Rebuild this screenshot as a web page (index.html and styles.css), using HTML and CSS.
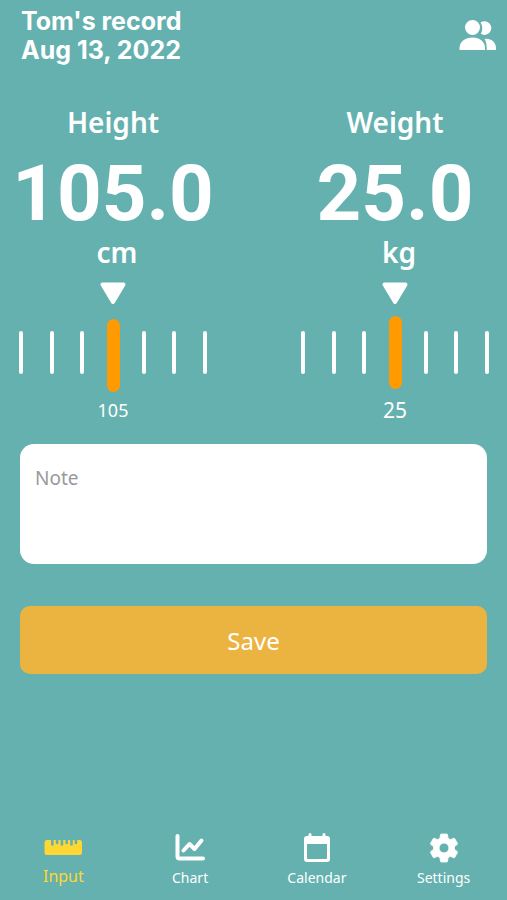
FILE: index.html
```html
<!DOCTYPE html>
<html lang="en">
<head>
<meta charset="utf-8">
<meta name="viewport" content="width=device-width, initial-scale=1">
<title>Tom's record</title>
<link rel="stylesheet" href="styles.css">
</head>
<body>
<header class="topbar">
  <h1 class="title">Tom's record<br>Aug 13, 2022</h1>
  <button class="people" type="button" aria-label="Switch person">
    <svg viewBox="0 0 38 30" width="38" height="30" fill="currentColor" aria-hidden="true">
      <circle cx="13.500" cy="7.500" r="7.500"/>
      <path d="M21.500 2.600a6.800 6.800 0 1 1 .3 11.200c2-3.600 2-7.600-.3-11.200z"/>
      <path d="M.5 30v-2c0-6 5.500-10.500 13-10.500S26 22 26 28v2z"/>
      <path d="M25.500 18.800c6.500-.8 11.500 3.200 11.500 9.200v2h-9.300v-2c0-3.600-.7-6.600-2.200-9.200z"/>
    </svg>
  </button>
</header>
<main>
  <form class="record">
    <div class="measures">
      <section class="measure">
        <h2 class="name" id="height">Height</h2>
        <output class="number">105.0</output>
        <span class="unit">cm</span>
        <svg class="pointer" viewBox="0 0 26 23" width="26" height="23" aria-hidden="true"><path d="M2.500 2.500h21L13 20z"/></svg>
        <div class="ruler">
          <div class="ticks"><i></i><i></i><i></i><i></i><i></i><i></i><i></i></div>
          <input class="slider" type="range" min="102" max="108" step="0.1" value="105" aria-labelledby="height">
        </div>
        <span class="mark">105</span>
      </section>
      <section class="measure">
        <h2 class="name" id="weight">Weight</h2>
        <output class="number">25.0</output>
        <span class="unit">kg</span>
        <svg class="pointer" viewBox="0 0 26 23" width="26" height="23" aria-hidden="true"><path d="M2.500 2.500h21L13 20z"/></svg>
        <div class="ruler ruler-raised">
          <div class="ticks"><i></i><i></i><i></i><i></i><i></i><i></i><i></i></div>
          <input class="slider" type="range" min="22" max="28" step="0.1" value="25" aria-labelledby="weight">
        </div>
        <span class="mark mark-large">25</span>
      </section>
    </div>
    <textarea class="note" placeholder="Note" aria-label="Note"></textarea>
    <button class="save" type="button">Save</button>
  </form>
</main>
<nav class="tabs">
  <a class="tab active" href="#input">
    <svg viewBox="0 0 38 32" width="38" height="32" aria-hidden="true">
      <path fill="currentColor" d="M3 8h4v4.500a1.300 1.300 0 0 0 2.600 0V8h2.200v3a1.300 1.300 0 0 0 2.600 0V8h2.200v4.500a1.300 1.300 0 0 0 2.600 0V8h2.200v3a1.300 1.300 0 0 0 2.600 0V8h2.200v4.500a1.300 1.300 0 0 0 2.600 0V8h1.800v3a1.300 1.300 0 0 0 2.600 0V8H36a2.500 2.500 0 0 1 2 2.500V20.500a2.500 2.500 0 0 1-2.500 2.500H3A2.500 2.500 0 0 1 .5 20.500v-10A2.500 2.500 0 0 1 3 8z"/>
    </svg>
    <span>Input</span>
  </a>
  <a class="tab" href="#chart">
    <svg viewBox="0 0 32 32" width="32" height="32" fill="none" stroke="currentColor" stroke-width="4" stroke-linecap="round" stroke-linejoin="round" aria-hidden="true">
      <path d="M3.500 4v20.500q0 2 2 2H29"/>
      <path d="M9.500 18.500l6-6.500 5 5 7-8.500"/>
    </svg>
    <span>Chart</span>
  </a>
  <a class="tab" href="#calendar">
    <svg viewBox="0 0 32 32" width="32" height="32" aria-hidden="true">
      <path fill="currentColor" fill-rule="evenodd" d="M9 1a1.500 1.500 0 0 1 1.500 1.500V4h11V2.500a1.500 1.500 0 0 1 3 0V4H26a3 3 0 0 1 3 3v20a3 3 0 0 1-3 3H6a3 3 0 0 1-3-3V7a3 3 0 0 1 3-3h1.500V2.500A1.500 1.500 0 0 1 9 1zM6 12v14a1 1 0 0 0 1 1h18a1 1 0 0 0 1-1V12z"/>
    </svg>
    <span>Calendar</span>
  </a>
  <a class="tab" href="#settings">
    <svg viewBox="1 1 22 22" width="32" height="32" aria-hidden="true">
      <path fill="currentColor" stroke="currentColor" stroke-width=".6" stroke-linejoin="round" d="M19.140 12.940c.04-.3.060-.61.060-.94 0-.32-.02-.64-.07-.94l2.030-1.580c.18-.14.230-.41.120-.61l-1.920-3.320c-.12-.22-.37-.29-.59-.22l-2.390.96c-.5-.38-1.030-.7-1.620-.94l-.36-2.540c-.04-.24-.24-.41-.48-.41h-3.840c-.24 0-.43.170-.47.410l-.36 2.540c-.59.240-1.130.57-1.620.94l-2.390-.96c-.22-.08-.47 0-.59.220L2.740 8.870c-.12.210-.08.470.120.610l2.030 1.580c-.05.3-.09.630-.09.940s.02.640.07.940l-2.030 1.580c-.18.140-.23.410-.12.610l1.920 3.320c.12.220.37.290.59.220l2.390-.96c.5.380 1.030.7 1.620.94l.36 2.540c.05.240.24.410.48.410h3.840c.24 0 .44-.17.470-.41l.36-2.540c.59-.24 1.130-.56 1.620-.94l2.390.96c.22.080.47 0 .59-.22l1.920-3.320c.12-.22.070-.47-.12-.61zM12 15.400a3.400 3.400 0 1 1 0-6.800 3.400 3.400 0 0 1 0 6.800z"/>
    </svg>
    <span>Settings</span>
  </a>
</nav>
</body>
</html>
```
FILE: styles.css
```css
* { box-sizing: border-box; }

body {
  margin: 0;
  min-height: 100vh;
  display: flex;
  flex-direction: column;
  background: #64b1af;
  color: #fff;
  font-family: "Noto Sans", "Open Sans", sans-serif;
}

main { flex: 1; }

.topbar {
  display: flex;
  justify-content: space-between;
  align-items: flex-start;
  padding: 7px 10px 0 21px;
}

.title {
  margin: 0;
  font: 700 25px/29px Inter, sans-serif;
}

.people {
  margin: 13px 0 0;
  padding: 0;
  border: 0;
  background: none;
  color: inherit;
}

.people svg { display: block; }

.record {
  display: flex;
  flex-direction: column;
  padding: 37px 20px 0;
}

.measures {
  display: flex;
  justify-content: space-between;
  margin: 0 -2px 0 -1px;
}

.measure {
  width: 40%;
  display: flex;
  flex-direction: column;
  align-items: center;
}

.name,
.unit {
  margin: 0;
  font-size: 28px;
  font-weight: 600;
  line-height: 40px;
}

.unit { padding-left: 8px; }

.number {
  padding-top: 14px;
  font: 700 78px/76px Roboto, sans-serif;
}

.pointer {
  margin-top: 10px;
  fill: #fff;
  stroke: #fff;
  stroke-width: 4;
  stroke-linejoin: round;
}

.ruler {
  width: 100%;
  height: 76px;
  margin-top: 11px;
  display: grid;
  align-items: end;
}

.ruler-raised { align-items: start; }

.ticks,
.slider { grid-area: 1 / 1; }

.ticks {
  align-self: center;
  display: flex;
  justify-content: space-between;
  padding-bottom: 4px;
}

.ticks i {
  width: 4px;
  height: 43px;
  border-radius: 2px;
  background: #fff;
}

.ticks i:nth-child(4) { visibility: hidden; }

.slider {
  appearance: none;
  width: 100%;
  height: 73px;
  margin: 0;
  background: none;
}

.slider::-webkit-slider-thumb {
  appearance: none;
  width: 13px;
  height: 73px;
  border-radius: 7px;
  background: #ff9a00;
}

.mark {
  margin-top: 4px;
  font-size: 18px;
  line-height: 28px;
}

.mark-large { font-size: 21px; }

.note {
  display: block;
  width: 100%;
  height: 120px;
  margin: 20px 0 42px;
  padding: 20px 15px;
  border: 0;
  border-radius: 14px;
  background: #fff;
  color: #444;
  font: 400 19px/28px "Noto Sans", "Open Sans", sans-serif;
  resize: none;
}

.note::placeholder { color: #999; }

.save {
  height: 68px;
  padding: 2px 0 0;
  border: 0;
  border-radius: 10px;
  background: #ebb441;
  color: #fff;
  font: 400 24px/32px "Noto Sans", "Open Sans", sans-serif;
}

.tabs {
  display: grid;
  grid-template-columns: repeat(4, 1fr);
  padding-bottom: 10px;
}

.tab {
  display: flex;
  flex-direction: column;
  align-items: center;
  gap: 2px;
  color: #fff;
  font-size: 14px;
  line-height: 24px;
  text-decoration: none;
}

.active {
  gap: 0;
  color: #fdd835;
  font-size: 16px;
}
```
